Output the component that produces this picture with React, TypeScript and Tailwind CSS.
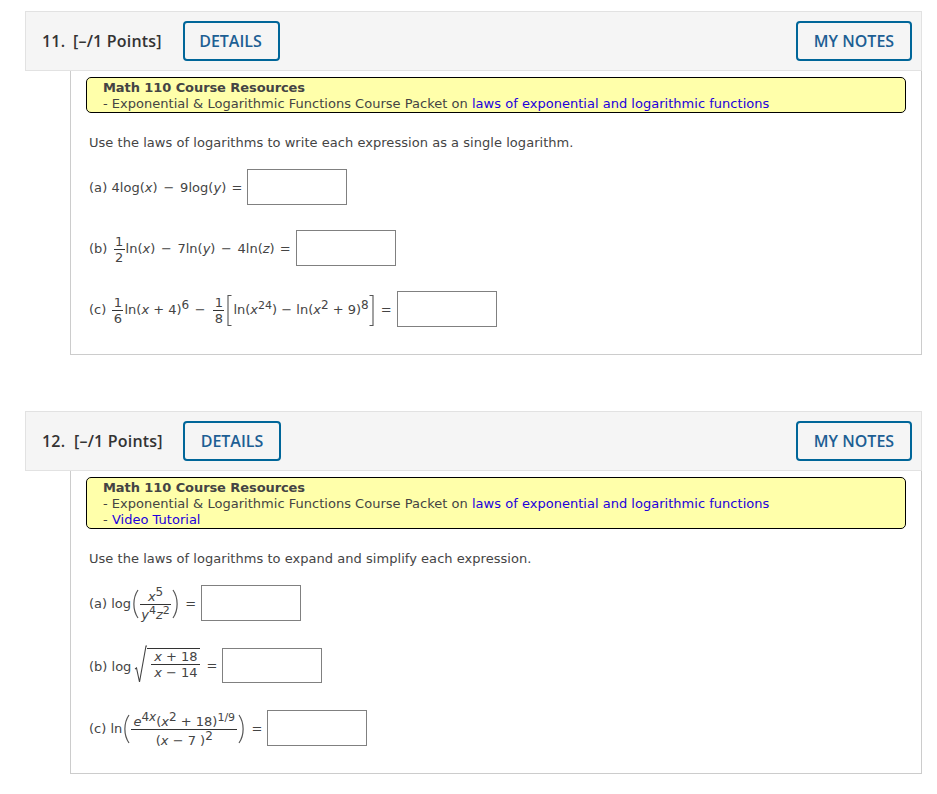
import type { ReactNode } from "react";

function I({ children }: { children: ReactNode }) {
  return <i className="italic">{children}</i>;
}

function Op({ children }: { children: ReactNode }) {
  return <span className="px-[1.5px]">{children}</span>;
}

function Eq() {
  return <span className="ml-px">=</span>;
}

function Sup({ children, small }: { children: ReactNode; small?: boolean }) {
  return <span className={`${small ? "text-[11px]" : "text-[12px]"} leading-none align-[5px]`}>{children}</span>;
}

function Frac({ top, bottom, w }: { top: ReactNode; bottom: ReactNode; w: string }) {
  return (
    <span className={`inline-flex flex-col items-center align-middle ${w}`}>
      <span className="leading-[15px] whitespace-nowrap">{top}</span>
      <span className="h-px w-full bg-[#333]" />
      <span className="leading-[15px] whitespace-nowrap">{bottom}</span>
    </span>
  );
}

function Paren({ right, h = 30 }: { right?: boolean; h?: number }) {
  return (
    <svg width="8" height={h} viewBox={`0 0 8 ${h}`} className={`inline align-middle ${right ? "-scale-x-100" : ""}`} fill="none">
      <path d={`M7 1C1.5 ${h * 0.3} 1.5 ${h * 0.7} 7 ${h - 1}`} stroke="#555" strokeWidth="1.2" />
    </svg>
  );
}

function Bracket({ right }: { right?: boolean }) {
  return (
    <svg width="5" height="31" viewBox="0 0 5 31" className={`inline align-middle ${right ? "-scale-x-100 mr-[2px]" : "ml-[2px] mr-px"}`} fill="none">
      <path d="M4.5 .5H1V30.5H4.5" stroke="#555" strokeWidth="1.1" />
    </svg>
  );
}

function Answer() {
  return <span className="ml-[5px] h-full w-[100px] shrink-0 border border-[#808080] bg-white" />;
}

function MathRow({ children, className }: { children: ReactNode; className: string }) {
  return (
    <div className={`flex items-center whitespace-pre text-[13px] text-[#444] ${className}`}>
      <span className="pt-[2px] leading-4">{children}</span>
      <Answer />
    </div>
  );
}

function Header({ num, numW, details }: { num: string; numW: string; details: string }) {
  return (
    <div className="flex h-[60px] items-center border border-[#e2e2e2] bg-[#f5f5f5] pl-4 pr-[9px] font-['Open_Sans',sans-serif] text-[16px] font-semibold text-[#333]">
      <span className="flex w-[141px] tracking-[0.2px]">
        <span className={numW}>{num}</span>
        <span>[–/1 Points]</span>
      </span>
      <button className={`h-10 ${details} rounded-[4px] border-2 border-[#006699] text-[#1d5f94]`}>DETAILS</button>
      <button className="ml-auto h-10 w-[116px] rounded-[4px] border-2 border-[#006699] text-[#1d5f94]">MY NOTES</button>
    </div>
  );
}

function Resources({ video }: { video?: boolean }) {
  return (
    <div className="ml-[15px] mr-[15px] rounded-[5px] border border-black bg-[#ffffaa] pl-4 pt-[2px] text-[13px] leading-4 tracking-[0.02px] text-[#444]">
      <div className="font-bold tracking-[-0.08px]">Math 110 Course Resources</div>
      <div>
        - Exponential &amp; Logarithmic Functions Course Packet on{" "}
        <span className="text-[#2200dd]">laws of exponential and logarithmic functions</span>
      </div>
      {video && (
        <div>
          - <span className="text-[#2200dd]">Video Tutorial</span>
        </div>
      )}
    </div>
  );
}

export default function App() {
  return (
    <div className="min-h-[794px] bg-white pl-[25px] pr-[15px] pt-[11px] font-['DejaVu_Sans',Verdana,sans-serif]">
      {/* question 11 */}
      <Header num="11." numW="w-[31px]" details="w-[97px] pr-[2px]" />
      <div className="ml-[45px] border-x border-b border-[#cccccc] pb-[27px] pt-[6px]">
        <Resources />
        <p className="ml-[18px] mt-[22px] text-[13px] leading-4 tracking-[0.04px] text-[#444]">
          Use the laws of logarithms to write each expression as a single logarithm.
        </p>
        <div className="ml-[18px] mt-[18px] flex flex-col gap-[25px]">
          <MathRow className="h-9 tracking-[0.05px]">
            (a) 4log(<I>x</I>) <Op>−</Op> 9log(<I>y</I>) <Eq />
          </MathRow>
          <MathRow className="h-9">
            (b) <Frac w="ml-[2px] mr-px w-[11px]" top="1" bottom="2" />ln(<I>x</I>) <Op>−</Op> 7ln(<I>y</I>) <Op>−</Op> 4ln(<I>z</I>) <Eq />
          </MathRow>
          <MathRow className="h-9">
            (c) <Frac w="ml-[2px] mr-px w-[11px]" top="1" bottom="6" />ln(<I>x</I> + 4)<Sup>6</Sup> <Op>−</Op> <Frac w="ml-[2px] mr-px w-[11px]" top="1" bottom="8" />
            <Bracket />ln(<I>x</I><Sup small>24</Sup>) − ln(<I>x</I><Sup>2</Sup> + 9)<Sup>8</Sup>
            <Bracket right /> <Eq />
          </MathRow>
        </div>
      </div>

      <div className="h-[56px]" />

      {/* question 12 */}
      <Header num="12." numW="w-[32px]" details="w-[98px]" />
      <div className="ml-[45px] border-x border-b border-[#cccccc] pb-[27px] pt-[6px]">
        <Resources video />
        <p className="ml-[18px] mt-[22px] text-[13px] leading-4 tracking-[0.04px] text-[#444]">
          Use the laws of logarithms to expand and simplify each expression.
        </p>
        <div className="ml-[18px] mt-[18px] flex flex-col">
          <MathRow className="h-9">
            (a) log<Paren />
            <Frac w="mx-px w-[31px]" top={<><I>x</I><Sup>5</Sup></>} bottom={<><I>y</I><Sup small>4</Sup><I>z</I><Sup small>2</Sup></>} />
            <Paren right /> <Eq />
          </MathRow>
          <MathRow className="mt-[27px] h-[35px]">
            (b) log
            <svg width="13" height="44" viewBox="0 0 13 44" fill="none" className="ml-[3px] inline align-middle">
              <path d="M1 24L2.5 23L5.5 37L12 1H13" stroke="#444" strokeWidth="1.1" />
            </svg>
            <span className="inline-flex flex-col pb-[6px] align-middle">
              <span className="flex flex-col border-t border-[#333] pl-[4px]">
                <Frac w="w-[49px]" top={<><I>x</I> + 18</>} bottom={<><I>x</I> − 14</>} />
              </span>
            </span>{" "}
            <span className="ml-[2px]">=</span>
          </MathRow>
          <MathRow className="mt-[27px] h-9">
            (c) ln<Paren />
            <Frac
              w="mx-px w-[106px]"
              top={<><I>e</I><Sup>4<I>x</I></Sup>(<I>x</I><Sup>2</Sup> + 18)<Sup small>1/9</Sup></>}
              bottom={<>(<I>x</I> − 7 )<Sup>2</Sup></>}
            />
            <Paren right /> <Eq />
          </MathRow>
        </div>
      </div>
    </div>
  );
}
